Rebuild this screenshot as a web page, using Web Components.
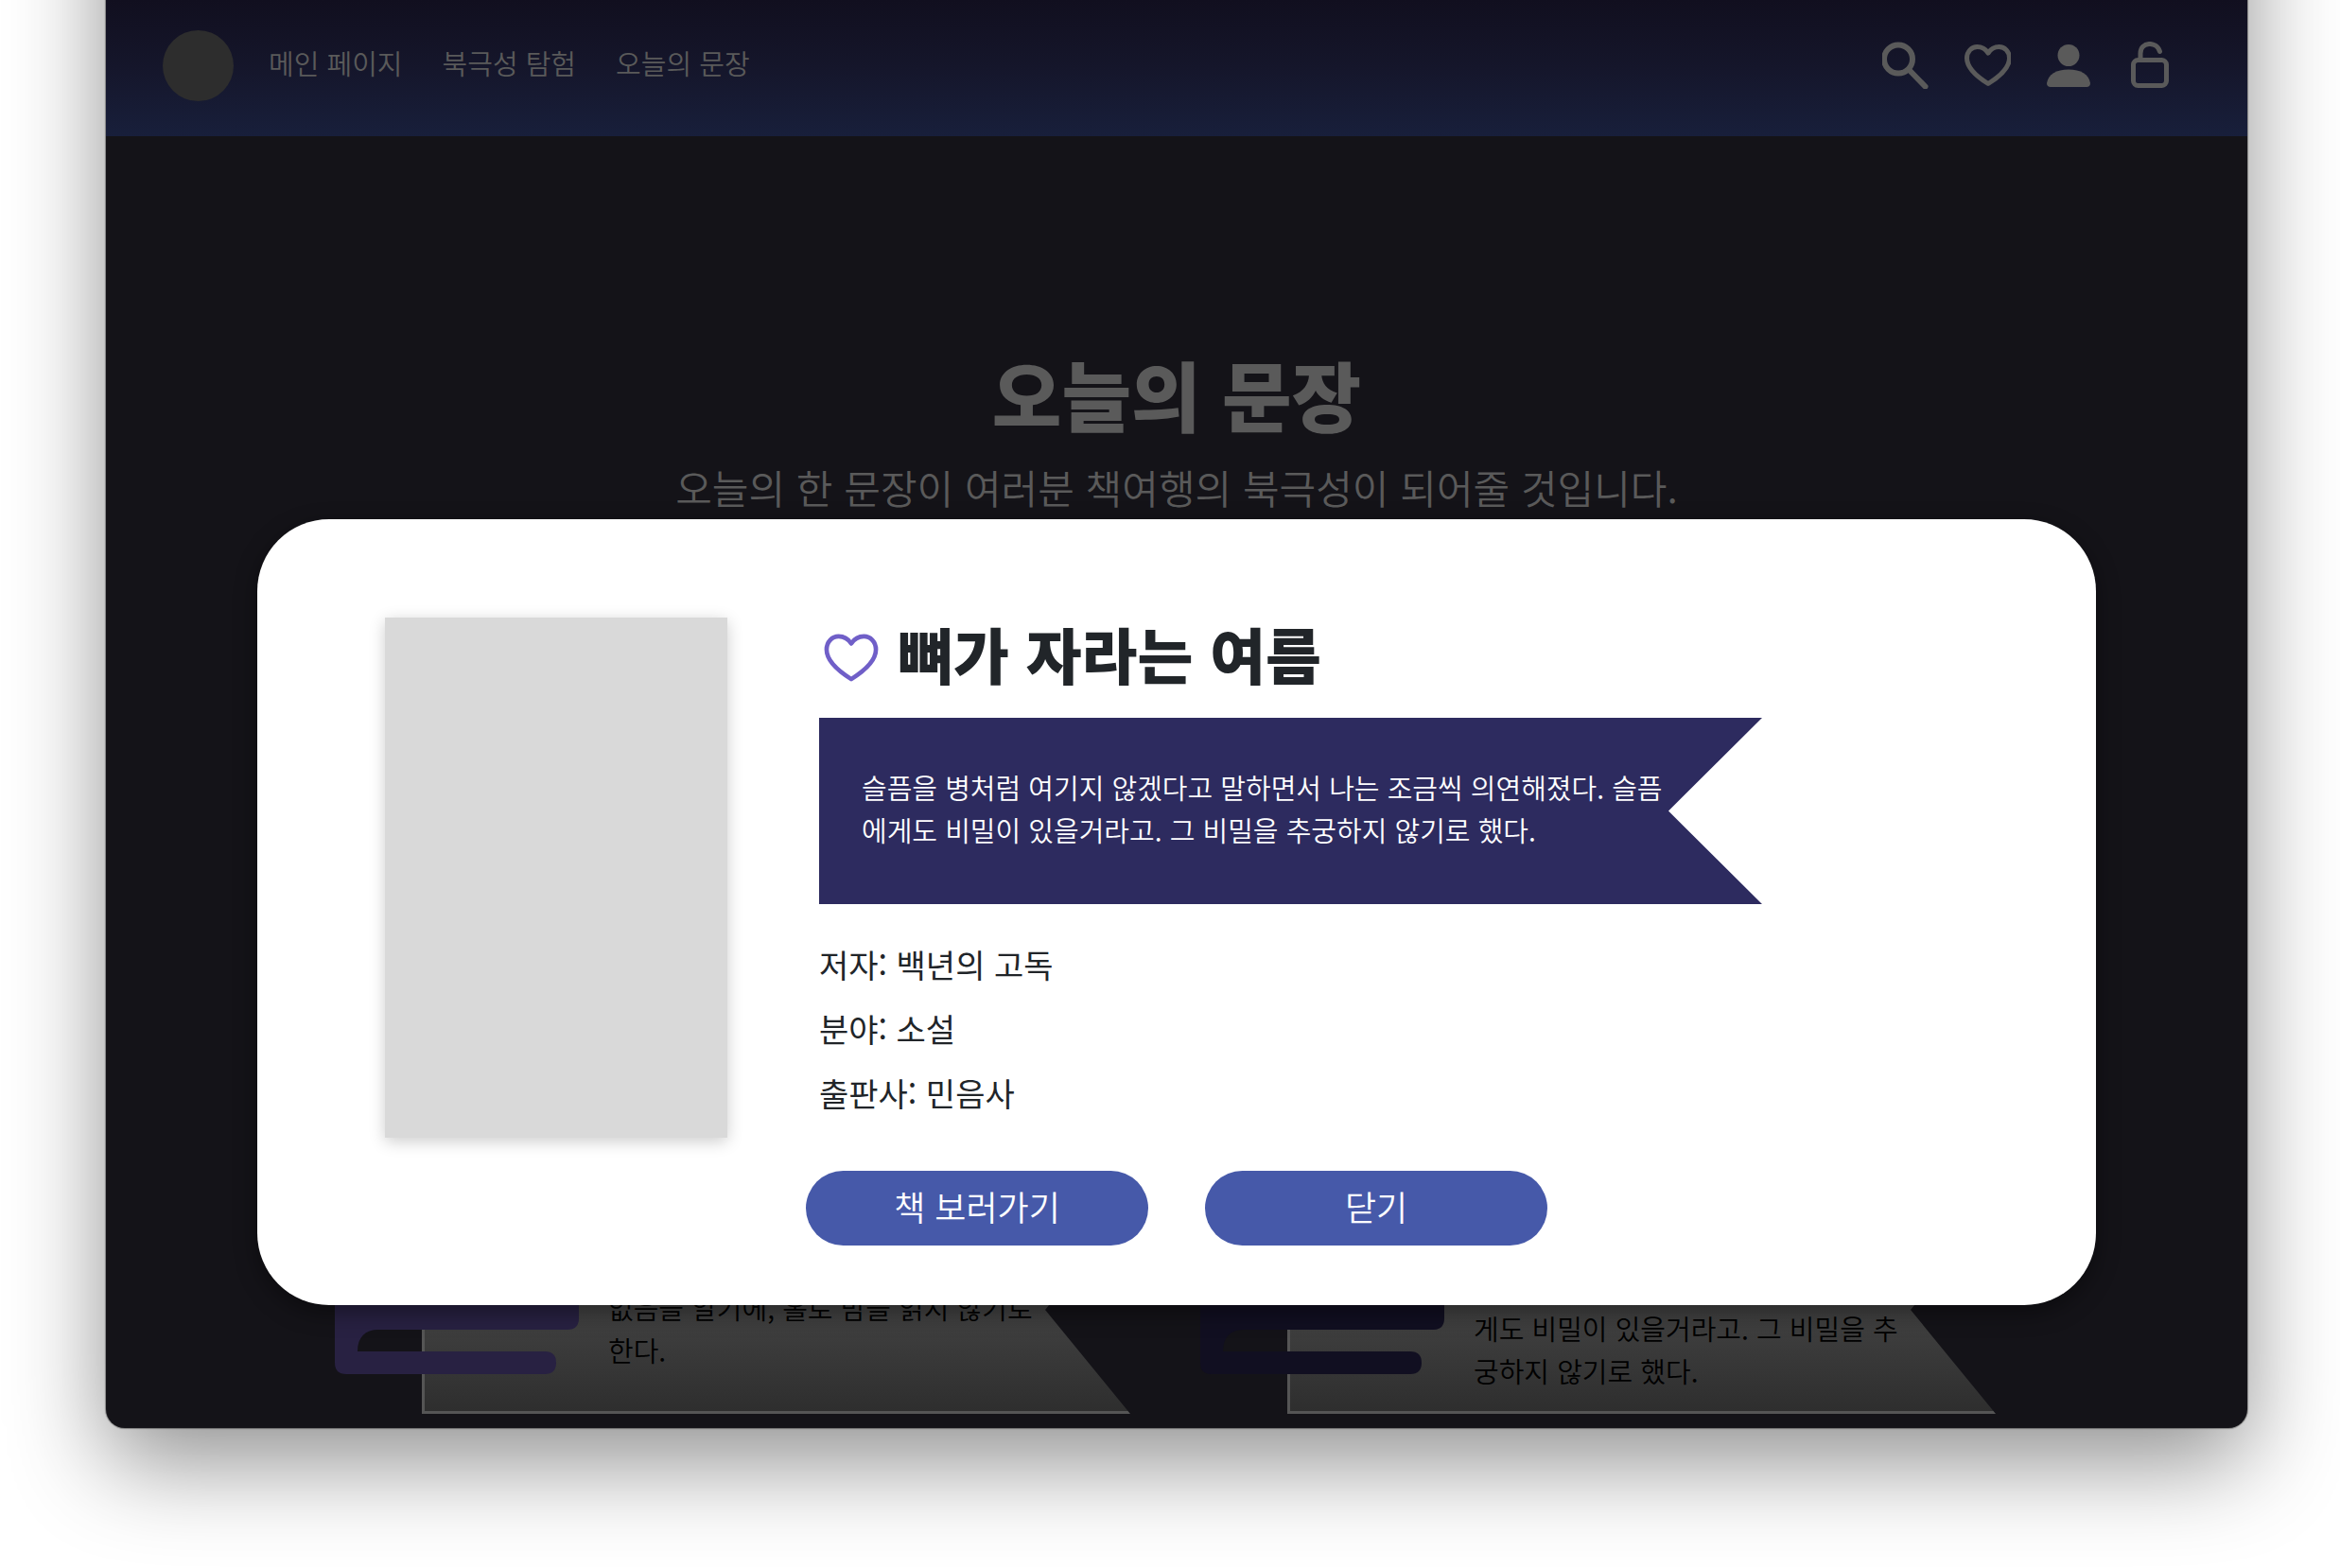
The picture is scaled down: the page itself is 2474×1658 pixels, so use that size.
<!DOCTYPE html>
<html lang="ko">
<head>
<meta charset="utf-8">
<title>오늘의 문장</title>
<style>
  body {
    margin: 0;
    padding: 0 98px 148px 112px;
    background: #fff;
    overflow: hidden;
    font-family: "Noto Sans CJK KR", "Noto Sans KR", sans-serif;
    font-weight: 350;
  }
</style>
</head>
<body>
<app-window>
  <site-header>
    <nav-link href="#main">메인 페이지</nav-link>
    <nav-link href="#explore">북극성 탐험</nav-link>
    <nav-link href="#today">오늘의 문장</nav-link>
  </site-header>
  <page-hero>
    <span slot="title">오늘의 문장</span>
    <span slot="subtitle">오늘의 한 문장이 여러분 책여행의 북극성이 되어줄 것입니다.</span>
  </page-hero>
  <card-list>
    <quote-card tone="violet">없음을 알기에, 홀로 밤을 읽지 않기로<br>한다.</quote-card>
    <quote-card tone="navy">게도 비밀이 있을거라고. 그 비밀을 추<br>궁하지 않기로 했다.</quote-card>
  </card-list>
  <book-modal slot="modal">
    <span slot="title">뼈가 자라는 여름</span>
    <quote-ribbon slot="quote">슬픔을 병처럼 여기지 않겠다고 말하면서 나는 조금씩 의연해졌다. 슬픔에게도 비밀이 있을거라고. 그 비밀을 추궁하지 않기로 했다.</quote-ribbon>
    <book-meta slot="meta" label="저자">백년의 고독</book-meta>
    <book-meta slot="meta" label="분야">소설</book-meta>
    <book-meta slot="meta" label="출판사">민음사</book-meta>
    <pill-button slot="actions">책 보러가기</pill-button>
    <pill-button slot="actions">닫기</pill-button>
  </book-modal>
</app-window>

<script>
const HEART_PATH = 'M25 41.5C17 36.5 2.5 26 2.5 14.5C2.5 7.5 7.5 2.5 13.5 2.5C18.5 2.5 22 4.5 25 9C28 4.5 31.5 2.5 36.5 2.5C42.5 2.5 47.5 7.5 47.5 14.5C47.5 26 33 36.5 25 41.5Z';

const makeTemplate = html => {
  const template = document.createElement('template');
  template.innerHTML = html;
  return template;
};

class BaseElement extends HTMLElement {
  constructor() {
    super();
    this.attachShadow({ mode: 'open' });
    this.shadowRoot.appendChild(this.constructor.template.content.cloneNode(true));
  }
}

class AppWindow extends BaseElement {
  static template = makeTemplate(`
    <style>
      :host {
        display: block;
        margin-top: -300px;
        padding-top: 300px;
        border-radius: 20px;
        background: #141318;
        box-shadow: 0 0 1px 1px rgba(0, 0, 0, .35), 0 36px 100px rgba(0, 0, 0, .44);
      }
      .page {
        position: relative;
      }
    </style>
    <div class="page">
      <slot></slot>
      <slot name="modal"></slot>
    </div>
  `);
}

class SiteHeader extends BaseElement {
  static template = makeTemplate(`
    <style>
      :host {
        display: flex;
        align-items: center;
        box-sizing: border-box;
        height: 144px;
        padding: 0 78px 6px 60px;
        background: linear-gradient(#110f1f, #15162b 50%, #181f3b);
        color: #5a5a5a;
      }
      .logo {
        width: 75px;
        height: 75px;
        margin-right: 37px;
        border-radius: 50%;
        background: #2d2d2d;
      }
      nav {
        flex: 1;
        display: flex;
        gap: 42px;
        padding-bottom: 6px;
      }
      .icons {
        display: flex;
        gap: 36px;
      }
      button {
        display: flex;
        padding: 0;
        border: 0;
        background: none;
        color: inherit;
        cursor: pointer;
      }
      svg {
        width: 50px;
        height: 50px;
        fill: none;
        stroke: currentColor;
        stroke-width: 5;
        stroke-linecap: round;
        stroke-linejoin: round;
      }
    </style>
    <a class="logo" href="#home" aria-label="홈"></a>
    <nav><slot></slot></nav>
    <div class="icons">
      <button aria-label="검색">
        <svg viewBox="1 0 50 50"><circle cx="18" cy="18.5" r="15" stroke-width="6"/><path d="M29 29.5L46.5 47.5" stroke-width="6"/></svg>
      </button>
      <button aria-label="찜">
        <svg viewBox="-1 -3 50 50"><path d="${HEART_PATH}"/></svg>
      </button>
      <button aria-label="내 정보">
        <svg viewBox="0 0 50 50"><g fill="currentColor" stroke="none"><circle cx="25" cy="14.5" r="11.5"/><path d="M6 48C3.5 48 2 46.5 2 44C3.5 34.5 12 29.5 25 29.5C38 29.5 46.5 34.5 48 44C48 46.5 46.5 48 44 48Z"/></g></svg>
      </button>
      <button aria-label="로그아웃">
        <svg viewBox="0 1 50 50"><rect x="7.5" y="20.5" width="35" height="27" rx="5"/><path d="M15 20V13.5C15 1 32 0 35.5 11.5"/></svg>
      </button>
    </div>
  `);
}

class NavLink extends BaseElement {
  static template = makeTemplate(`
    <style>
      :host {
        display: block;
        font-size: 29px;
        line-height: 44px;
      }
      a {
        color: inherit;
        text-decoration: none;
      }
    </style>
    <a><slot></slot></a>
  `);

  connectedCallback() {
    this.shadowRoot.querySelector('a').setAttribute('href', this.getAttribute('href'));
  }
}

class PageHero extends BaseElement {
  static template = makeTemplate(`
    <style>
      :host {
        display: block;
        padding-top: 211px;
        color: #5a5a5a;
        text-align: center;
      }
      h1 {
        margin: 0;
        font-size: 80px;
        font-weight: 900;
        line-height: 120px;
      }
      p {
        margin: 0;
        font-size: 42px;
        line-height: 80px;
      }
    </style>
    <h1><slot name="title"></slot></h1>
    <p><slot name="subtitle"></slot></p>
  `);
}

class CardList extends BaseElement {
  static template = makeTemplate(`
    <style>
      :host {
        display: grid;
        grid-template-columns: 1fr 1fr;
        gap: 74px;
        padding: 720px 266px 15px 242px;
      }
    </style>
    <slot></slot>
  `);
}

class QuoteCard extends BaseElement {
  static template = makeTemplate(`
    <style>
      :host {
        --bookColour: #282142;
        --textPadding: 42px;
        display: grid;
        align-items: end;
      }
      :host([tone="navy"]) {
        --bookColour: #110f21;
        --textPadding: 20px;
      }
      .ribbon,
      svg {
        grid-area: 1 / 1;
      }
      .ribbon {
        box-sizing: border-box;
        display: flex;
        align-items: flex-end;
        height: 220px;
        margin-left: 92px;
        padding: 0 100px var(--textPadding) 194px;
        border: solid #555;
        border-width: 3px 0 3px 3px;
        background: linear-gradient(#555, #2e2e2e);
        clip-path: polygon(0 0, 100% 0, calc(100% - 90px) 50%, 100% 100%, 0 100%);
      }
      p {
        margin: 0;
        color: #000;
        font-size: 29px;
        line-height: 45px;
        white-space: nowrap;
      }
      svg {
        z-index: 1;
        width: 258px;
        height: 160px;
        margin-bottom: 42px;
        fill: var(--bookColour);
      }
    </style>
    <div class="ribbon"><p><slot></slot></p></div>
    <svg viewBox="0 0 258 160"><path d="M12 0H246Q258 0 258 12V101Q258 113 246 113H46C32 113 24 121 24 136H222Q234 136 234 148Q234 160 222 160H12Q0 160 0 148V12Q0 0 12 0Z"/></svg>
  `);
}

class BookModal extends BaseElement {
  static template = makeTemplate(`
    <style>
      :host {
        position: absolute;
        z-index: 2;
        top: 549px;
        left: 160px;
        right: 160px;
        box-sizing: border-box;
        padding: 104px 135px 63px;
        border-radius: 76px;
        background: #fff;
        color: #212529;
        box-shadow: 0 8px 24px rgba(0, 0, 0, .4);
      }
      .book {
        display: flex;
        gap: 97px;
      }
      .cover {
        flex: none;
        width: 362px;
        height: 550px;
        background: #d9d9d9;
        box-shadow: 0 4px 16px rgba(0, 0, 0, .2);
      }
      .info {
        flex: 1;
      }
      .heading {
        display: flex;
        align-items: center;
        gap: 20px;
        margin-bottom: 22px;
      }
      h2 {
        margin: 0;
        padding-bottom: 10px;
        font-size: 64px;
        font-weight: 900;
        line-height: 74px;
      }
      button {
        display: flex;
        padding: 0 0 0 5px;
        border: 0;
        background: none;
        color: #705fc8;
        cursor: pointer;
      }
      svg {
        width: 58px;
        height: 51px;
        fill: none;
        stroke: currentColor;
        stroke-width: 4;
        stroke-linejoin: round;
      }
      .meta {
        margin-top: 30px;
      }
      .actions {
        display: flex;
        justify-content: center;
        gap: 60px;
        margin-top: 35px;
      }
    </style>
    <div role="dialog" aria-labelledby="title">
      <div class="book">
        <div class="cover"></div>
        <div class="info">
          <div class="heading">
            <button aria-label="찜하기"><svg viewBox="0 0 50 44"><path d="${HEART_PATH}"/></svg></button>
            <h2 id="title"><slot name="title"></slot></h2>
          </div>
          <slot name="quote"></slot>
          <div class="meta"><slot name="meta"></slot></div>
        </div>
      </div>
      <div class="actions"><slot name="actions"></slot></div>
    </div>
  `);
}

class QuoteRibbon extends BaseElement {
  static template = makeTemplate(`
    <style>
      :host {
        display: block;
        max-width: 852px;
        padding: 51px 100px 56px 45px;
        background: #2d2b5f;
        color: #fff;
        clip-path: polygon(0 0, 100% 0, calc(100% - 99px) 50%, 100% 100%, 0 100%);
      }
      p {
        margin: 0;
        font-size: 29px;
        line-height: 45px;
        word-break: break-all;
      }
    </style>
    <p><slot></slot></p>
  `);
}

class BookMeta extends BaseElement {
  static template = makeTemplate(`
    <style>
      :host {
        display: block;
        font-size: 34px;
        font-weight: 400;
        line-height: 68px;
      }
    </style>
    <span class="label"></span><slot></slot>
  `);

  connectedCallback() {
    this.shadowRoot.querySelector('.label').textContent = `${this.getAttribute('label')}: `;
  }
}

class PillButton extends BaseElement {
  static template = makeTemplate(`
    <style>
      :host {
        display: block;
      }
      button {
        min-width: 362px;
        height: 79px;
        padding: 0 40px 6px;
        border: 0;
        border-radius: 40px;
        background: #4659a9;
        color: #fff;
        font: inherit;
        font-size: 36px;
        cursor: pointer;
      }
    </style>
    <button><slot></slot></button>
  `);
}

window.customElements.define('app-window', AppWindow);
window.customElements.define('site-header', SiteHeader);
window.customElements.define('nav-link', NavLink);
window.customElements.define('page-hero', PageHero);
window.customElements.define('card-list', CardList);
window.customElements.define('quote-card', QuoteCard);
window.customElements.define('book-modal', BookModal);
window.customElements.define('quote-ribbon', QuoteRibbon);
window.customElements.define('book-meta', BookMeta);
window.customElements.define('pill-button', PillButton);
</script>
</body>
</html>
